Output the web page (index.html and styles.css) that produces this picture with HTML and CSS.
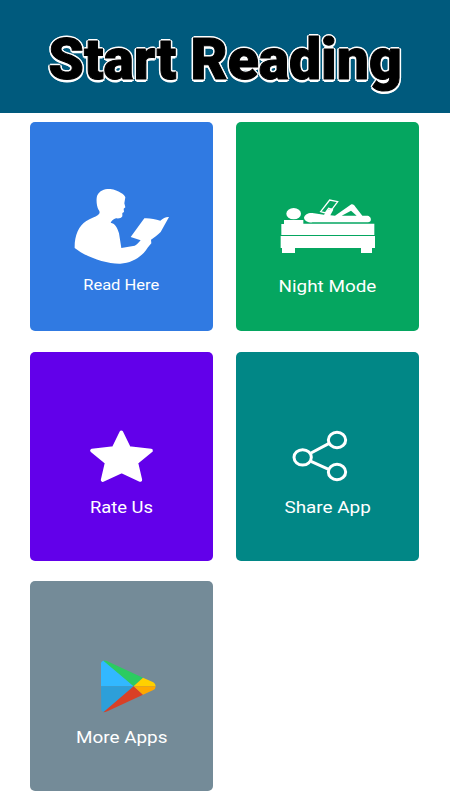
FILE: index.html
```
<!DOCTYPE html>
<html lang="en">
<head>
<meta charset="UTF-8">
<title>Start Reading</title>
<link rel="stylesheet" href="styles.css">
</head>
<body>

<header class="banner">
  <h1 class="bannerTitle">Start Reading</h1>
</header>

<main class="tiles">

  <div class="tile read">
    <svg class="icon" viewBox="0 0 360 264">
      <path d="M44 204 C43 170 55 137 79 123 C91 115 106 112 114 105 C120 100 120 95 116 90 C109 77 108 56 112 46 C119 31 135 26 151 27 C164 28 174 34 182 38 C190 42 195 47 196 52 L193 70 L196 82 L191 86 L192 96 L187 99 L187 109 C184 115 176 116 168 115 C160 118 155 122 152 128 C164 130 172 142 177 160 L184 204 L224 197 C231 194 235 188 242 181 L212 171 L253 115 C268 114 285 117 301 122 C309 115 318 110 327 111 L302 156 C292 166 283 173 273 179 L274 190 C266 198 260 209 251 219 C231 239 209 249 181 251 C136 252 75 229 44 204 Z"/>
    </svg>
    <span class="label">Read Here</span>
  </div>

  <div class="tile night">
    <svg class="icon" viewBox="0 0 390 264">
      <ellipse cx="86" cy="86" rx="22" ry="17"/>
      <path d="M57 105 H115 V116 H328 V150 H49 V117 H57 Z"/>
      <path d="M47 153 H330 V189 H321 V204 H288 V189 H90 V204 H51 V189 H47 Z"/>
      <path d="M117 98 C119 88 130 83 142 84 L177 89 L188 75 L202 70 L205 74 L196 91 L210 92 L257 59 C263 56 268 60 271 65 L292 92 H308 C317 94 320 103 316 109 C313 113 307 112 300 112 H144 C129 113 118 108 117 98 Z"/>
      <path class="hole" d="M230 92 L258 77 L275 92 Z"/>
      <path class="outline" d="M167 80 L194 45 L218 50 L201 73 L191 70 L181 84 Z"/>
    </svg>
    <span class="label">Night Mode</span>
  </div>

  <div class="tile rate">
    <svg class="icon" viewBox="0 0 270 210">
      <path class="star" d="M124 37 L147 84 L213 92 L169 128 L181 180 L125 154 L68 180 L80 128 L36 92 L101 84 Z"/>
    </svg>
    <span class="label">Rate Us</span>
  </div>

  <div class="tile share">
    <svg class="icon" viewBox="0 0 315 210">
      <path class="link" d="M108 99 L161 71 M108 124 L161 148"/>
      <ellipse class="node" cx="83" cy="112" rx="26" ry="23"/>
      <ellipse class="node" cx="186" cy="60" rx="26" ry="23"/>
      <ellipse class="node" cx="186" cy="156" rx="26" ry="23"/>
    </svg>
    <span class="label">Share App</span>
  </div>

  <div class="tile more">
    <svg class="icon" viewBox="0 0 345 210">
      <path fill="#32b8ff" d="M108 109 V40 Q109 32 117 32 L124 35 L206 109 Z"/>
      <path fill="#2d9fd9" d="M108 109 H206 L123 184 Q116 189 109 181 Z"/>
      <path fill="#2ccb61" d="M115 32 Q121 31 127 34 L234 83 L206 109 Z"/>
      <path fill="#d94026" d="M206 109 L234 134 L127 184 Q121 187 115 187 Z"/>
      <path fill="#ffd000" d="M234 83 L265 97 Q272 101 272 109 H206 Z"/>
      <path fill="#ffa800" d="M206 109 H272 Q272 117 265 120 L234 134 Z"/>
    </svg>
    <span class="label">More Apps</span>
  </div>

</main>

</body>
</html>
```
FILE: styles.css
```
body { margin: 0 ; background-color: #ffffff ; font-family: Roboto, "Liberation Sans", sans-serif ; }

.banner      { box-sizing: border-box ; height: 113.4px ; padding-top: 27px ;
               background-color: #005a7d ; text-align: center ; }
.bannerTitle { margin: 0 ; font-size: 57px ; line-height: 66px ; font-weight: 900 ;
               white-space: nowrap ; color: #000000 ;
               -webkit-text-stroke: 1px #000000 ;
               text-shadow: -1.5px -1.5px 0 #ffffff , 0 -2px 0 #ffffff , 1.5px -1.5px 0 #ffffff ,
                            -2px 0 0 #ffffff , 2px 0 0 #ffffff ,
                            -1.5px 2px 0 #ffffff , 0 2.5px 0 #ffffff , 1.5px 2px 0 #ffffff ; }

.tiles { display: grid ; grid-template-columns: 182.5px 182.5px ; grid-auto-rows: 209.4px ;
         gap: 20.4px 23.9px ; padding: 8.5px 0 0 30px ; }

.tile  { display: flex ; flex-direction: column ; align-items: center ;
         box-sizing: border-box ; border-radius: 5px ; }
.read  { background-color: #307ae2 ; padding-top: 58px ; }
.night { background-color: #05a660 ; padding-top: 63px ; }
.rate  { background-color: #6200ea ; padding-top: 68px ; }
.share { background-color: #018786 ; padding-top: 68px ; }
.more  { background-color: #748b98 ; padding-top: 69px ; }

.icon           { display: block ; height: 70px ; fill: #ffffff ; }
.read .icon     { width: 120px ; height: 88px ; margin-left: -3px ; }
.night .icon    { width: 130px ; height: 88px ; margin-left: 4px ; }
.rate .icon     { width: 90px ; margin-left: 7px ; }
.share .icon    { width: 105px ; margin-left: -1px ; }
.more .icon     { width: 115px ; margin-left: 2px ; }

.hole    { fill: #05a660 ; }
.outline { fill: none ; stroke: #ffffff ; stroke-width: 4px ; }
.star    { stroke: #ffffff ; stroke-width: 11px ; stroke-linejoin: round ; }
.link    { fill: none ; stroke: #ffffff ; stroke-width: 9px ; }
.node    { fill: none ; stroke: #ffffff ; stroke-width: 9px ; }

.label        { font-size: 16px ; line-height: 20px ; color: #ffffff ; white-space: nowrap ;
                transform: scaleX(1.18) ; }
.read .label  { font-size: 14px ; margin-top: 7px ; }
.night .label { margin-top: 4px ; }
.rate .label  { margin-top: 8px ; transform: scaleX(1.15) ; }
.share .label { margin-top: 8px ; }
.more .label  { margin-top: 8px ; }
```
